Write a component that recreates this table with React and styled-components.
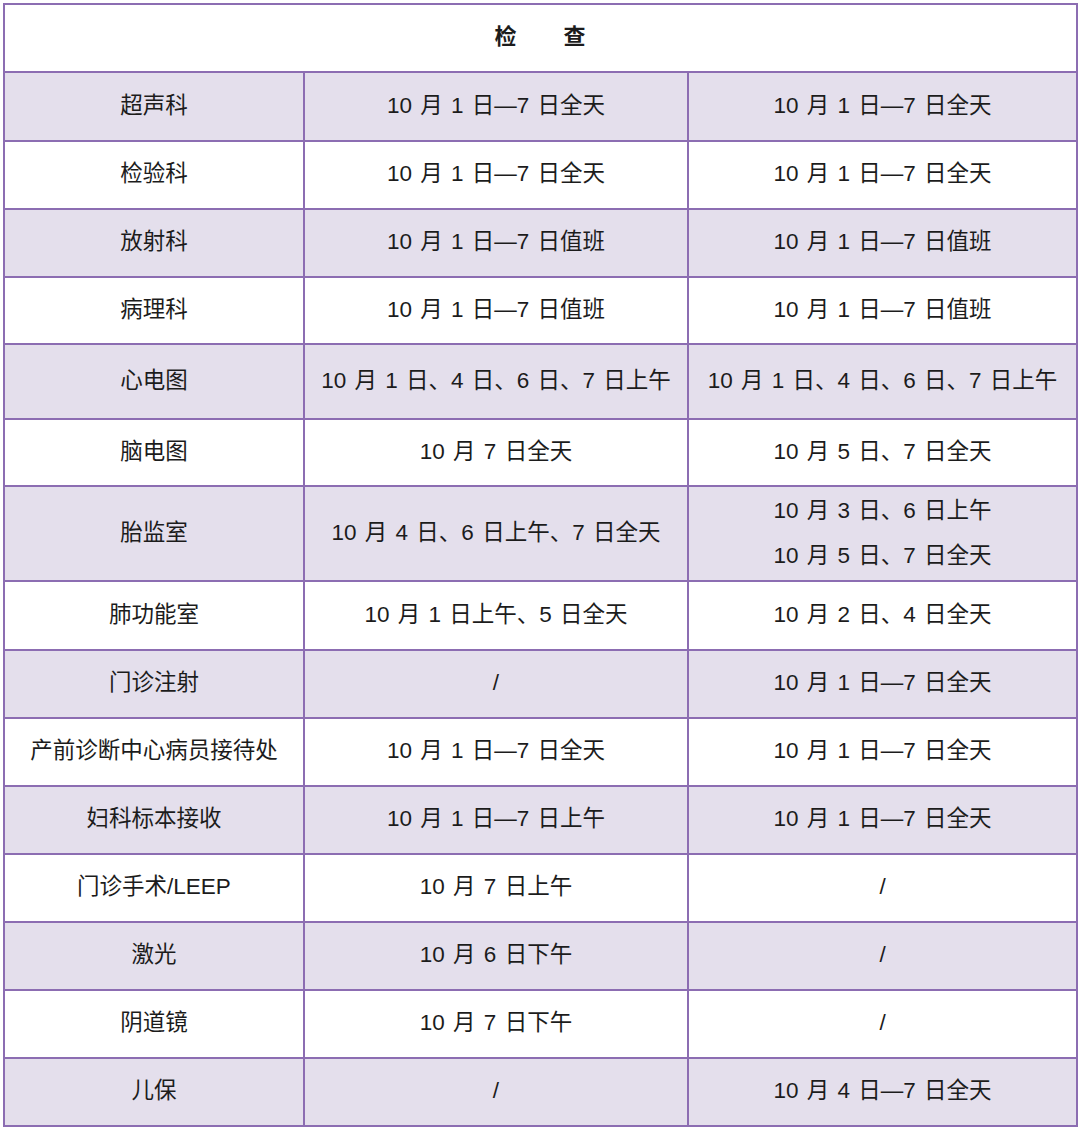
import React from "react";
import styled, { createGlobalStyle } from "styled-components";

const GlobalStyle = createGlobalStyle`
  body {
    margin: 0;
    background: #fff;
    font-family: "Liberation Sans", "Noto Sans CJK SC", sans-serif;
    color: #1c1c1c;
  }
`;

const Page = styled.div`
  padding: 3px 4px 6px 3px;
`;

const Table = styled.table`
  width: 1073px;
  border-collapse: collapse;
  table-layout: fixed;
  font-size: 22.5px;
  word-spacing: 2px;
`;

const Row = styled.tr`
  height: ${(p) => p.$height || 68}px;
  background-color: ${(p) => (p.$shade ? "#e4dfec" : "#fff")};
`;

const Cell = styled.td`
  border: 2px solid #8c6db2;
  text-align: center;
  vertical-align: middle;
  padding: 0 4px 2px;
  line-height: 46px;
  white-space: nowrap;
`;

const HeadCell = styled(Cell)`
  font-weight: 700;
  font-size: 22px;
  letter-spacing: 1px;
`;

const Line = styled.div`
  line-height: 45px;
`;

const rows = [
  ["超声科", "10 月 1 日—7 日全天", "10 月 1 日—7 日全天", 69],
  ["检验科", "10 月 1 日—7 日全天", "10 月 1 日—7 日全天"],
  ["放射科", "10 月 1 日—7 日值班", "10 月 1 日—7 日值班"],
  ["病理科", "10 月 1 日—7 日值班", "10 月 1 日—7 日值班", 67],
  ["心电图", "10 月 1 日、4 日、6 日、7 日上午", "10 月 1 日、4 日、6 日、7 日上午", 75],
  ["脑电图", "10 月 7 日全天", "10 月 5 日、7 日全天", 67],
  ["胎监室", "10 月 4 日、6 日上午、7 日全天", ["10 月 3 日、6 日上午", "10 月 5 日、7 日全天"], 95],
  ["肺功能室", "10 月 1 日上午、5 日全天", "10 月 2 日、4 日全天", 69],
  ["门诊注射", "/", "10 月 1 日—7 日全天"],
  ["产前诊断中心病员接待处", "10 月 1 日—7 日全天", "10 月 1 日—7 日全天"],
  ["妇科标本接收", "10 月 1 日—7 日上午", "10 月 1 日—7 日全天"],
  ["门诊手术/LEEP", "10 月 7 日上午", "/"],
  ["激光", "10 月 6 日下午", "/"],
  ["阴道镜", "10 月 7 日下午", "/"],
  ["儿保", "/", "10 月 4 日—7 日全天"],
];

const renderValue = (value) =>
  Array.isArray(value)
    ? value.map((line) => <Line key={line}>{line}</Line>)
    : value;

export default function App() {
  return (
    <Page>
      <GlobalStyle />
      <Table>
        <colgroup>
          <col style={{ width: "300px" }} />
          <col style={{ width: "384px" }} />
          <col style={{ width: "389px" }} />
        </colgroup>
        <tbody>
          <Row $height={68}>
            <HeadCell colSpan={3}>检　　查</HeadCell>
          </Row>
          {rows.map(([name, first, second, height], i) => (
            <Row key={name} $shade={i % 2 === 0} $height={height}>
              <Cell>{name}</Cell>
              <Cell>{renderValue(first)}</Cell>
              <Cell>{renderValue(second)}</Cell>
            </Row>
          ))}
        </tbody>
      </Table>
    </Page>
  );
}
